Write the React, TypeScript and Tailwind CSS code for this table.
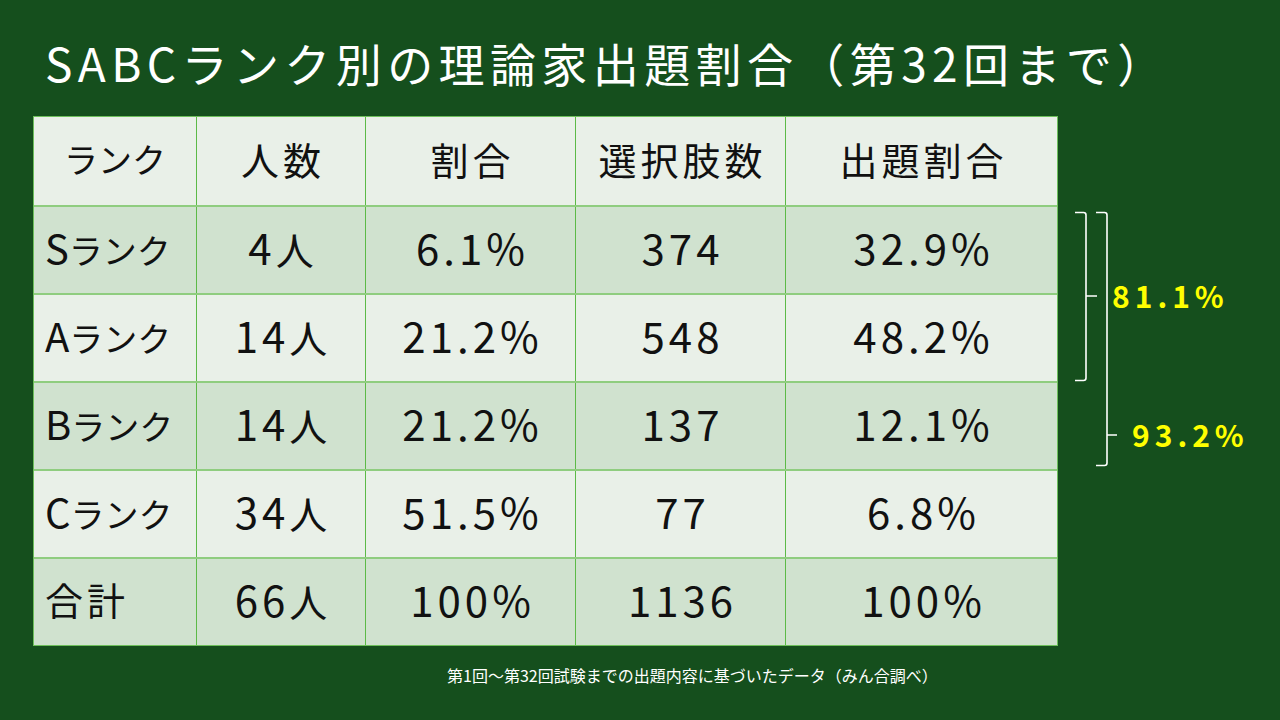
import React from "react";

const header = ["ランク", "人数", "割合", "選択肢数", "出題割合"];
const rows = [
  ["Sランク", "4人", "6.1%", "374", "32.9%"],
  ["Aランク", "14人", "21.2%", "548", "48.2%"],
  ["Bランク", "14人", "21.2%", "137", "12.1%"],
  ["Cランク", "34人", "51.5%", "77", "6.8%"],
  ["合計", "66人", "100%", "1136", "100%"],
];

const font = { fontFamily: '"Noto Sans CJK JP", "Noto Sans", sans-serif' };

function Glyphs({ text }: { text: string }) {
  const chars = Array.from(text);
  return (
    <span className="leading-none whitespace-nowrap">
      {chars.map((ch, i) => {
        let cls = "";
        if (/[0-9.%]/.test(ch)) cls = "text-[42px] tracking-[4px]";
        else if (/[A-Z]/.test(ch)) cls = "text-[40px] tracking-[0px]";
        else if (/[\u4e00-\u9fff]/.test(ch)) cls = "text-[38px] tracking-[4px]";
        else cls = "text-[34px] tracking-[0px]";
        return (
          <span key={i} className={cls}>
            {ch}
          </span>
        );
      })}
    </span>
  );
}

export default function App() {
  return (
    <div
      className="relative w-[1280px] h-[720px] overflow-hidden bg-[#154f1d] flex flex-col"
      style={font}
    >
      <h1 className="mt-[34px] ml-[45px] text-[46px] leading-[56px] tracking-[5.4px] text-white font-normal whitespace-nowrap">
        SABCランク別の理論家出題割合（第32回まで）
      </h1>

      <div className="mt-[26px] ml-[33px] w-[1025px] border border-[#6dbf5b] text-[#111]">
        <div className="grid grid-cols-[162px_169px_210px_210px_272px] h-[88px] bg-[#e9f0e8]">
          {header.map((h, i) => (
            <div
              key={i}
              className={`flex items-center justify-center pb-[4px] ${
                i > 0 ? "border-l border-[#5cba47] pl-[4px]" : ""
              }`}
            >
              <Glyphs text={h} />
            </div>
          ))}
        </div>
        {rows.map((r, ri) => (
          <div
            key={ri}
            className={`grid grid-cols-[162px_169px_210px_210px_272px] h-[88px] border-t-2 border-[#8fcd7f] ${
              ri % 2 === 0 ? "bg-[#d0e2cf]" : "bg-[#e9f0e8]"
            }`}
          >
            {r.map((c, ci) => (
              <div
                key={ci}
                className={`flex items-center pb-[6px] ${
                  ci === 0
                    ? "justify-start pl-[11px]"
                    : "justify-center border-l border-[#5cba47] pl-[4px]"
                }`}
              >
                <Glyphs text={c} />
              </div>
            ))}
          </div>
        ))}
      </div>

      <p className="mt-[19px] ml-[447px] text-[16px] leading-[20px] text-white whitespace-nowrap">
        第1回〜第32回試験までの出題内容に基づいたデータ（みん合調べ）
      </p>

      <svg
        className="absolute left-0 top-0"
        width="1280"
        height="720"
        viewBox="0 0 1280 720"
        fill="none"
      >
        <path
          d="M1075 212.5 H1083.5 Q1086 212.5 1086 215 V378 Q1086 380.5 1083.5 380.5 H1075 M1086 296 H1097"
          stroke="#ffffff"
          strokeWidth="1.6"
        />
        <path
          d="M1096 212.5 H1104.5 Q1107 212.5 1107 215 V463 Q1107 465.5 1104.5 465.5 H1096 M1107 435 H1117"
          stroke="#ffffff"
          strokeWidth="1.6"
        />
      </svg>

      <div className="absolute left-[1112px] top-[275px] text-[30px] leading-[40px] tracking-[5px] font-semibold text-[#ffff00]">
        81.1%
      </div>
      <div className="absolute left-[1132px] top-[414px] text-[30px] leading-[40px] tracking-[5px] font-semibold text-[#ffff00]">
        93.2%
      </div>
    </div>
  );
}
